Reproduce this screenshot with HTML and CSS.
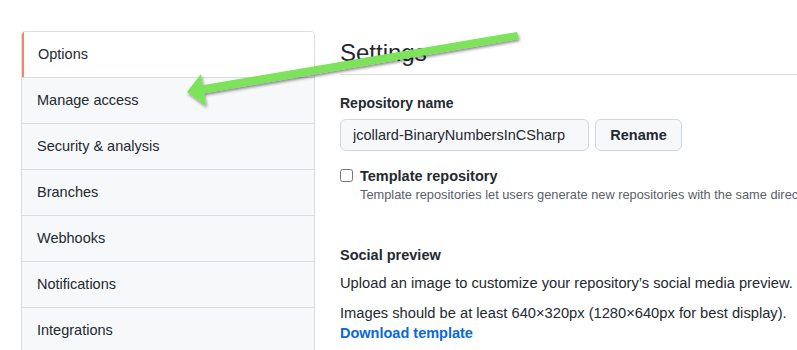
FILE: index.html
```html
<!DOCTYPE html>
<html lang="en">
<head>
    <meta charset="UTF-8">
    <title>Settings · Options</title>
    <link rel="stylesheet" href="styles.css">
</head>
<body>
    <div class="page">
        <nav class="menu">
            <a class="menu-item selected" href="#">Options</a>
            <a class="menu-item" href="#">Manage access</a>
            <a class="menu-item" href="#">Security &amp; analysis</a>
            <a class="menu-item" href="#">Branches</a>
            <a class="menu-item" href="#">Webhooks</a>
            <a class="menu-item" href="#">Notifications</a>
            <a class="menu-item" href="#">Integrations</a>
        </nav>

        <div class="content">
            <h2 class="subhead">Settings</h2>

            <label class="field-label" for="repo-name">Repository name</label>
            <div class="rename-row">
                <input type="text" id="repo-name" class="form-control" value="jcollard-BinaryNumbersInCSharp">
                <button class="btn">Rename</button>
            </div>

            <div class="check">
                <input type="checkbox" id="template">
                <div>
                    <label for="template" class="check-label">Template repository</label>
                    <p class="note">Template repositories let users generate new repositories with the same direc</p>
                </div>
            </div>

            <h3 class="section-title">Social preview</h3>
            <p class="text">Upload an image to customize your repository’s social media preview.</p>
            <p class="text tight">Images should be at least 640×320px (1280×640px for best display).</p>
            <a class="link" href="#">Download template</a>
        </div>
    </div>

    <!-- annotation arrow drawn over the screenshot -->
    <svg class="arrow" width="797" height="350" viewBox="0 0 797 350">
        <defs>
            <filter id="shadow" x="-10%" y="-50%" width="120%" height="200%">
                <feDropShadow dx="1" dy="2" stdDeviation="1.5" flood-color="#000" flood-opacity="0.45"/>
            </filter>
        </defs>
        <g filter="url(#shadow)" fill="#7de35a">
            <polygon points="517,32 519,39 200,94 198,86"/>
            <polygon points="187,92 201,74 206,106"/>
        </g>
    </svg>
</body>
</html>
```

FILE: styles.css
```css
* {
    margin: 0;
    padding: 0;
    box-sizing: border-box;
}

body {
    font-family: "Liberation Sans", Arial, sans-serif;
    color: #24292f;
    background-color: #fff;
    width: 797px;
    height: 350px;
    overflow: hidden;
    position: relative;
}

.page {
    display: flex;
    gap: 25px;
    padding: 31px 0 0 21px;
}

/* Side menu */
.menu {
    width: 294px;
    flex-shrink: 0;
    display: flex;
    flex-direction: column;
    border: 1px solid #d8dee4;
    border-radius: 4px;
    overflow: hidden;
}

.menu-item {
    display: block;
    height: 46px;
    line-height: 45px;
    padding-left: 15px;
    font-size: 14.5px;
    color: #24292f;
    text-decoration: none;
    background-color: #f6f8fa;
    border-top: 1px solid #d8dee4;
}

.menu-item:first-child {
    border-top: none;
    height: 45px;
}

.menu-item.selected {
    background-color: #fff;
    border-left: 2px solid #f9826c;
    padding-left: 14px;
}

/* Main content */
.content {
    flex: 1;
    min-width: 0;
    white-space: nowrap;
    overflow: hidden;
}

.subhead {
    font-size: 24px;
    font-weight: normal;
    line-height: 36px;
    padding-top: 4px;
    padding-bottom: 3px;
    border-bottom: 1px solid #d8dee4;
    margin-bottom: 18px;
}

.field-label {
    display: block;
    font-size: 14px;
    font-weight: bold;
    line-height: 20px;
    margin-bottom: 6px;
}

.rename-row {
    display: flex;
    gap: 6px;
    margin-bottom: 18px;
}

.form-control {
    width: 249px;
    height: 32px;
    padding: 0 12px;
    font-family: inherit;
    font-size: 14.5px;
    color: #24292f;
    background-color: #f6f8fa;
    border: 1px solid #d0d7de;
    border-radius: 6px;
}

.btn {
    width: 87px;
    height: 32px;
    font-family: inherit;
    font-size: 14.5px;
    font-weight: bold;
    color: #24292f;
    background-color: #f6f8fa;
    border: 1px solid #d0d7de;
    border-radius: 6px;
}

.check {
    display: flex;
    gap: 7px;
    margin-bottom: 40px;
}

.check input {
    width: 13px;
    height: 13px;
    margin-top: 0;
    flex-shrink: 0;
}

.check-label {
    display: block;
    font-size: 14.5px;
    font-weight: bold;
    line-height: 14px;
}

.note {
    font-size: 12.8px;
    color: #57606a;
    line-height: 20px;
    margin-top: 2px;
}

.section-title {
    font-size: 14.5px;
    font-weight: bold;
    line-height: 20px;
    margin-bottom: 8px;
}

.text {
    font-size: 14.7px;
    line-height: 20px;
    margin-bottom: 10px;
}

.text.tight {
    margin-bottom: 0;
}

.link {
    display: block;
    font-size: 14.5px;
    font-weight: bold;
    line-height: 20px;
    color: #0969da;
    text-decoration: none;
}

/* annotation overlay */
.arrow {
    position: absolute;
    top: 0;
    left: 0;
    pointer-events: none;
}
```
